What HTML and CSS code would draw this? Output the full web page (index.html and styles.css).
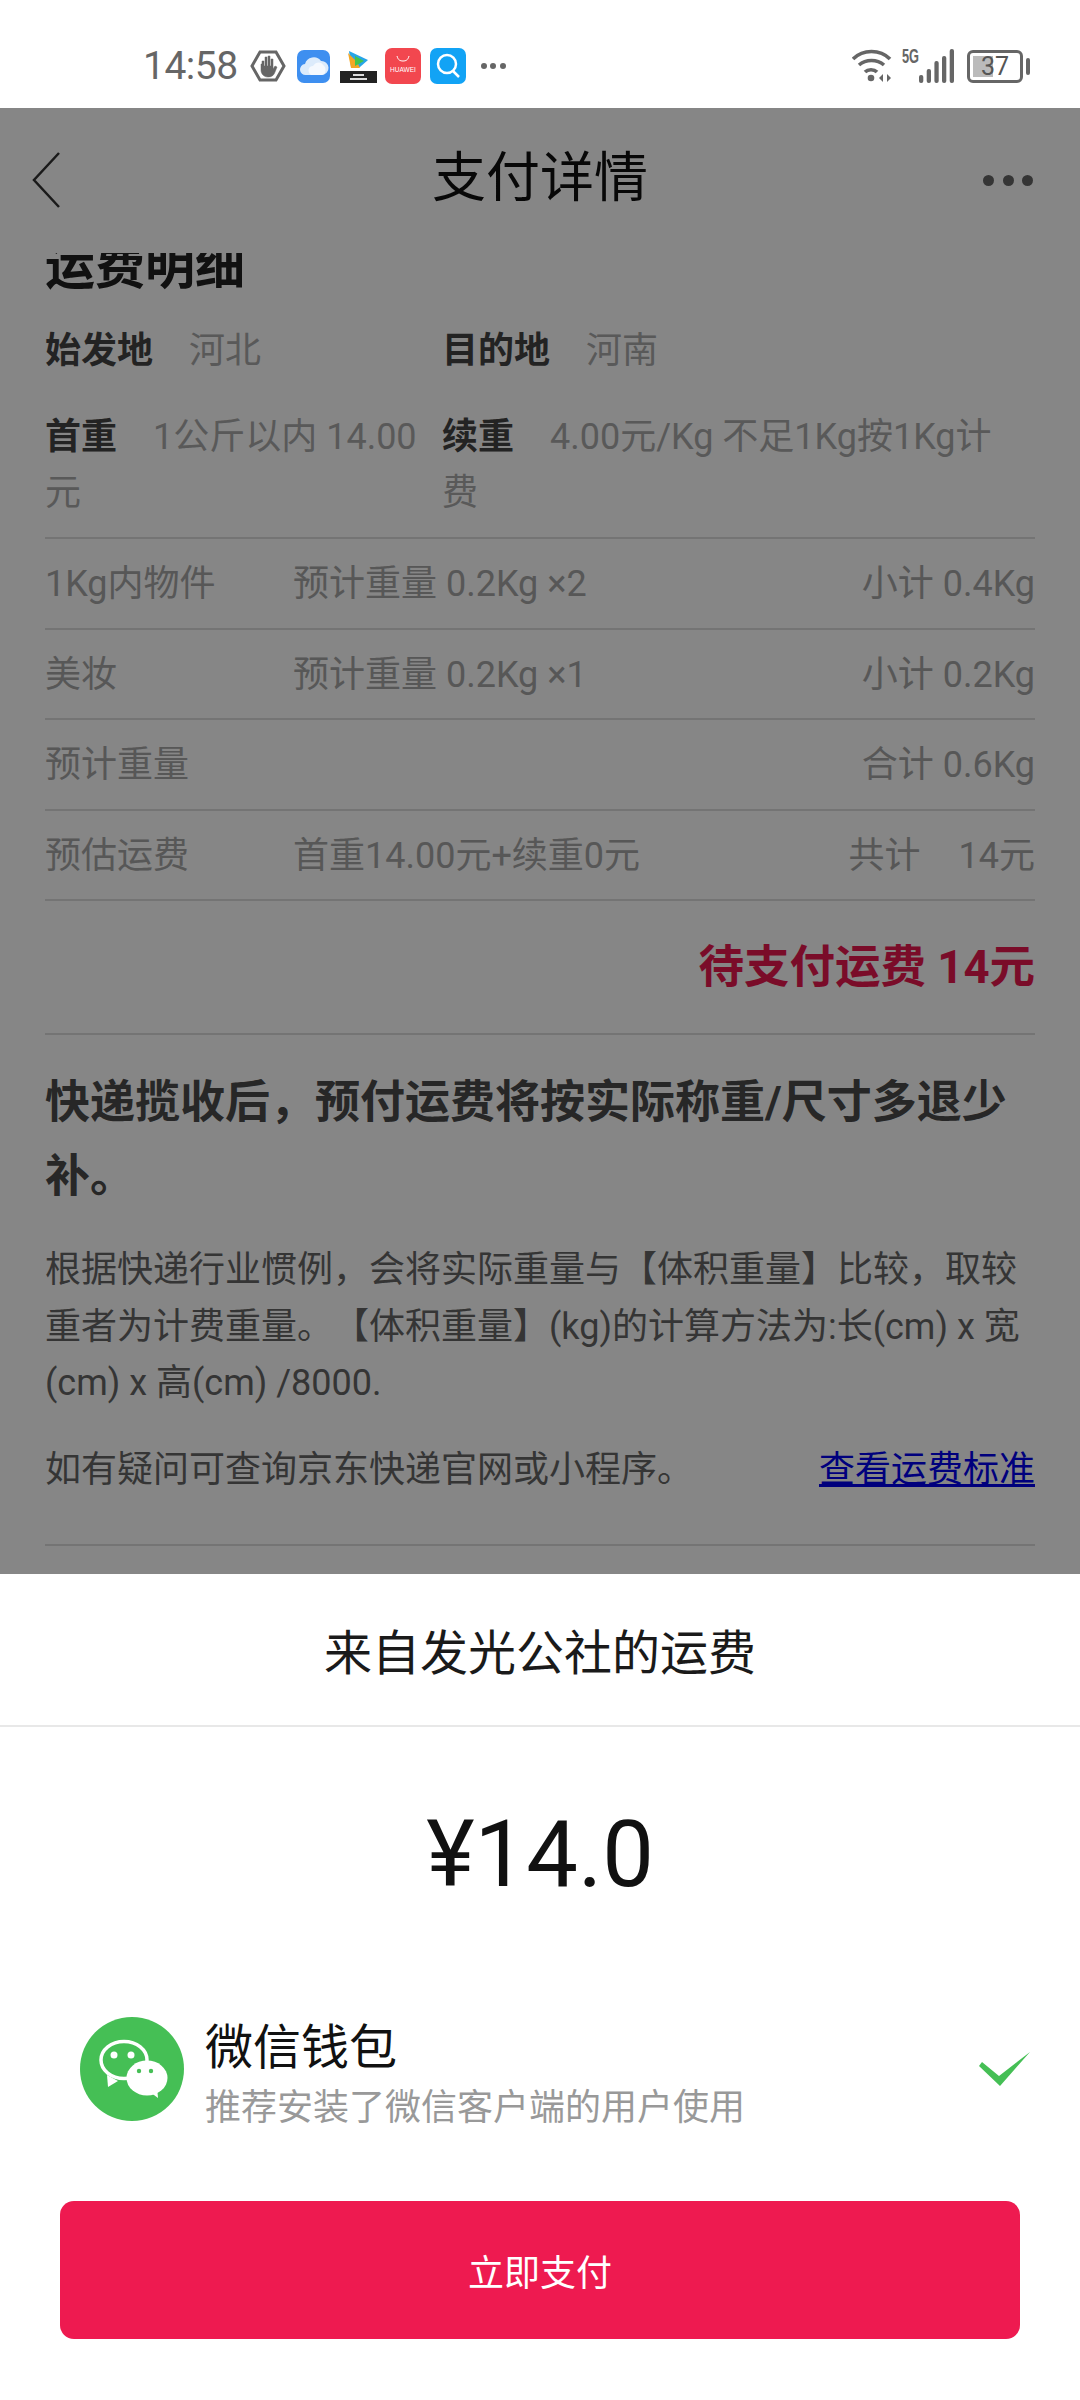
FILE: index.html
```html
<!DOCTYPE html>
<html lang="zh">

<head>
    <meta charset="utf-8">
    <title>支付详情</title>
    <link rel="stylesheet" href="styles.css">
</head>

<body>
    <!-- Status bar -->
    <div class="status-bar">
        <div class="status-left">
            <span class="clock">14:58</span>
            <svg class="ic-hand" viewBox="0 0 36 32"><path d="M10 2h16l8 14-8 14H10L2 16z" fill="none" stroke="#666" stroke-width="3"/><path d="M11 14v6c0 4 3 7 7 7s6-2 7-5l2-5-2-1-2 3V9h-2v7h-1V6h-2v10h-1V7h-2v9h-1v-5h-2v3z" fill="#666" stroke="#666" stroke-width=".5"/></svg>
            <svg class="ic-cloud" viewBox="0 0 33 33"><rect width="33" height="33" rx="7" fill="#3e8ff0"/><path d="M9 25a5.500 5.500 0 0 1-1-11A9 9 0 0 1 24 11a7 7 0 0 1 1 14z" fill="#dcebfb"/><path d="M14 25c-4-3-3-9 2-9 3-5 9-4 10-1 4 2 3 10-1 10z" fill="#fff" opacity=".7"/></svg>
            <svg class="ic-tv" viewBox="0 0 37 33"><path d="M9 1l19 9-8 7H11z" fill="#27a5e8"/><path d="M8 3l3 15 9 0-3-6z" fill="#f5a623"/><path d="M15 6l9 5-9 5z" fill="#45c34a"/><rect y="21" width="37" height="12" fill="#222"/><path d="M13 24h11v2H13zM10 28h17v2H10z" fill="#ddd"/></svg>
            <svg class="ic-huawei" viewBox="0 0 36 36"><rect width="36" height="36" rx="7" fill="#f2474f"/><path d="M12 8c1 4 3 5 6 5s5-1 6-5" fill="none" stroke="#fff" stroke-width="1"/><text x="18" y="24" class="huawei-text">HUAWEI</text></svg>
            <svg class="ic-search" viewBox="0 0 36 36"><rect width="36" height="36" rx="7" fill="#12a3f5"/><circle cx="17" cy="16" r="9" fill="none" stroke="#fff" stroke-width="2.500"/><path d="M23 23l6 6" stroke="#fff" stroke-width="2.500"/></svg>
            <span class="status-dots"><i></i><i></i><i></i></span>
        </div>
        <div class="status-right">
            <svg class="ic-wifi" viewBox="0 0 40 34"><g fill="none" stroke="#666" stroke-width="3.600"><path d="M1 10c10-10 27-10 37 0"/><path d="M7 16c7-6 18-6 25 0"/><path d="M13 23c3-3 9-3 12 0"/></g><circle cx="19" cy="29" r="3.300" fill="#666"/><path d="M27 29l4-4v8zM35 25v8l4-4z" fill="#666"/></svg>
            <span class="fiveg">5G</span>
            <svg class="ic-signal" viewBox="0 0 35 34"><g fill="#666"><rect x="0" y="26" width="4.300" height="8" rx="2"/><rect x="7.700" y="20" width="4.300" height="14" rx="2"/><rect x="15.400" y="12" width="4.300" height="22" rx="2"/><rect x="23" y="7" width="4.300" height="27" rx="2"/><rect x="30.700" y="0" width="4.300" height="34" rx="2"/></g></svg>
            <div class="battery">
                <div class="battery-body"><span class="battery-fill"></span><span class="battery-num">37</span></div>
                <span class="battery-cap"></span>
            </div>
        </div>
    </div>

    <div class="page">
        <!-- Title bar -->
        <div class="nav">
            <svg class="ic-back" viewBox="0 0 28 56"><path d="M27 1L2 28l25 27" fill="none" stroke="#333" stroke-width="2.500"/></svg>
            <h1>支付详情</h1>
            <span class="nav-dots"><i></i><i></i><i></i></span>
        </div>

        <!-- Scrolled content, the heading is cut by the title bar -->
        <div class="scroll">
            <div class="scroll-inner">
                <h2>运费明细</h2>

                <div class="info-grid">
                    <p><b>始发地</b><span>河北</span></p>
                    <p><b>目的地</b><span>河南</span></p>
                    <p><b>首重</b><span>1公斤以内 14.00元</span></p>
                    <p><b>续重</b><span>4.00元/Kg 不足1Kg按1Kg计费</span></p>
                </div>

                <div class="fee-row"><span class="fee-name">1Kg内物件</span><span class="fee-mid">预计重量 0.2Kg ×2</span><span class="fee-end">小计 0.4Kg</span></div>
                <div class="fee-row"><span class="fee-name">美妆</span><span class="fee-mid">预计重量 0.2Kg ×1</span><span class="fee-end">小计 0.2Kg</span></div>
                <div class="fee-row"><span class="fee-name">预计重量</span><span class="fee-mid"></span><span class="fee-end">合计 0.6Kg</span></div>
                <div class="fee-row"><span class="fee-name">预估运费</span><span class="fee-mid">首重14.00元+续重0元</span><span class="fee-end">共计<em>14元</em></span></div>

                <div class="total">待支付运费 14元</div>

                <h3>快递揽收后，预付运费将按实际称重/尺寸多退少补。</h3>
                <p class="note">根据快递行业惯例，会将实际重量与【体积重量】比较，取较重者为计费重量。【体积重量】(kg)的计算方法为:长(cm) x 宽(cm) x 高(cm) /8000.</p>
                <div class="help">
                    <span>如有疑问可查询京东快递官网或小程序。</span>
                    <a href="#">查看运费标准</a>
                </div>
            </div>
        </div>

        <div class="mask"></div>

        <!-- Payment sheet -->
        <div class="sheet">
            <div class="sheet-title">来自发光公社的运费</div>
            <div class="amount">¥14.0</div>
            <div class="pay-option">
                <svg class="ic-wechat" viewBox="0 0 104 104">
                    <circle cx="52" cy="52" r="52" fill="#45bf55"/>
                    <path d="M27 58l1 12 10-6z" fill="#fff"/>
                    <ellipse cx="44" cy="43" rx="23" ry="18.500" fill="none" stroke="#fff" stroke-width="3.500"/>
                    <circle cx="34" cy="38" r="3.500" fill="#fff"/>
                    <circle cx="51" cy="38" r="3.500" fill="#fff"/>
                    <ellipse cx="67" cy="61" rx="20.500" ry="17.500" fill="#fff"/>
                    <path d="M70 75l8 6-1-11z" fill="#fff"/>
                    <circle cx="59" cy="54" r="2.200" fill="#45bf55"/>
                    <circle cx="71" cy="54" r="2.200" fill="#45bf55"/>
                </svg>
                <div class="pay-text">
                    <div class="pay-name">微信钱包</div>
                    <div class="pay-desc">推荐安装了微信客户端的用户使用</div>
                </div>
                <svg class="ic-check" viewBox="0 0 51 34"><path d="M0 14l3-4 17 14L51 0 21 34z" fill="#45bf55"/></svg>
            </div>
            <button class="pay-btn">立即支付</button>
        </div>
    </div>
</body>

</html>
```

FILE: styles.css
```css
* {
    box-sizing: border-box;
}

body {
    margin: 0;
    width: 1080px;
    height: 2400px;
    overflow: hidden;
    background: #fff;
    font-family: "Roboto", "Noto Sans CJK SC", sans-serif;
    color: #222;
    text-spacing-trim: space-all;
}

/* Status bar */
.status-bar {
    height: 108px;
    display: flex;
    justify-content: space-between;
    align-items: center;
    padding: 24px 50px 0 143px;
    color: #666;
}

.status-left,
.status-right {
    display: flex;
    align-items: center;
}

.clock {
    font-size: 39px;
    letter-spacing: -0.5px;
    margin-right: 12px;
}

.ic-hand {
    width: 36px;
    height: 32px;
    margin-right: 11px;
}

.ic-cloud {
    width: 33px;
    height: 33px;
    margin-right: 10px;
}

.ic-tv {
    width: 37px;
    height: 33px;
    margin-right: 8px;
}

.ic-huawei {
    width: 36px;
    height: 36px;
    margin-right: 9px;
}

.ic-search {
    width: 36px;
    height: 36px;
}

.huawei-text {
    font-family: "Liberation Sans", sans-serif;
    font-size: 6.500px;
    fill: #fff;
    text-anchor: middle;
}

.status-dots {
    display: flex;
    gap: 3.500px;
    margin-left: 15px;
}

.status-dots i {
    width: 6px;
    height: 6px;
    border-radius: 50%;
    background: #666;
}

.ic-wifi {
    width: 40px;
    height: 34px;
    margin-right: 10px;
}

/* narrow label squeezed with a transform, no condensed bold face installed */
.fiveg {
    width: 17px;
    align-self: flex-start;
    font-family: "Liberation Sans", sans-serif;
    font-size: 20px;
    font-weight: bold;
    line-height: 15px;
    white-space: nowrap;
    transform: scaleX(0.64);
    transform-origin: left top;
}

.ic-signal {
    width: 35px;
    height: 34px;
}

.battery {
    display: flex;
    align-items: center;
    margin-left: 13px;
}

.battery-body {
    position: relative;
    width: 56px;
    height: 33px;
    border: 3px solid #666;
    border-radius: 6px;
    overflow: hidden;
}

.battery-fill {
    position: absolute;
    left: 3px;
    top: 3px;
    bottom: 3px;
    width: 20px;
    background: #bbb;
}

.battery-num {
    position: relative;
    display: block;
    text-align: center;
    font-size: 25px;
    line-height: 27px;
    color: #555;
}

.battery-cap {
    width: 4px;
    height: 17px;
    margin-left: 3px;
    border-radius: 2px;
    background: #666;
}

/* Page under the mask */
.page {
    position: relative;
    height: 2292px;
    overflow: hidden;
}

.nav {
    height: 145px;
    display: flex;
    align-items: center;
    justify-content: center;
    padding-bottom: 3px;
    position: relative;
    background: #fff;
    z-index: 1;
}

.nav h1 {
    margin: 0;
    font-size: 54px;
    font-weight: 400;
    color: #111;
    line-height: 1;
}

.ic-back {
    position: absolute;
    left: 32px;
    top: 44px;
    width: 28px;
    height: 56px;
}

.nav-dots {
    position: absolute;
    right: 47px;
    top: 67px;
    display: flex;
    gap: 8.500px;
}

.nav-dots i {
    width: 11px;
    height: 11px;
    border-radius: 50%;
    background: #666;
}

.scroll {
    height: 1321px;
    overflow: hidden;
    padding: 0 45px;
}

.scroll-inner {
    margin-top: -21px;
}

.scroll h2 {
    margin: 0 0 21px;
    font-size: 50px;
    line-height: 70px;
    font-weight: 700;
    color: #222;
}

.info-grid {
    display: grid;
    grid-template-columns: 397px 1fr;
    row-gap: 30px;
    padding-bottom: 16px;
    border-bottom: 2px solid #ddd;
}

.info-grid p {
    margin: 0;
    padding-right: 10px;
    font-size: 36px;
    line-height: 56px;
    color: #aaa;
}

.info-grid p:first-child,
.info-grid p:nth-child(3) {
    padding-right: 0;
}

.info-grid b {
    color: #444;
    margin-right: 36px;
}

.fee-row {
    height: 90.500px;
    display: flex;
    align-items: center;
    padding-bottom: 6px;
    font-size: 36px;
    color: #a6a6a6;
    border-bottom: 2px solid #ddd;
}

.fee-name {
    width: 248px;
}

.fee-mid {
    flex: 1;
}

.fee-end em {
    font-style: normal;
    margin-left: 38px;
}

.total {
    height: 134px;
    display: flex;
    align-items: center;
    justify-content: flex-end;
    padding-bottom: 8px;
    font-size: 45.500px;
    font-weight: 700;
    color: #e8184f;
    border-bottom: 2px solid #ddd;
}

.scroll h3 {
    margin: 31px 0 28px;
    font-size: 45px;
    line-height: 74px;
    font-weight: 700;
    color: #4a4a4a;
}

.note {
    margin: 0;
    font-size: 36px;
    line-height: 56.500px;
    color: #666;
}

.help {
    display: flex;
    justify-content: space-between;
    margin-top: 30px;
    padding-bottom: 46px;
    font-size: 36px;
    line-height: 56px;
    color: #666;
    border-bottom: 2px solid #ddd;
}

.help a {
    color: #0000ee;
}

.mask {
    position: absolute;
    inset: 0;
    z-index: 2;
    background: rgba(0, 0, 0, 0.475);
}

/* Bottom sheet */
.sheet {
    position: absolute;
    left: 0;
    right: 0;
    bottom: 0;
    height: 826px;
    z-index: 3;
    background: #fff;
    text-align: center;
}

.sheet-title {
    height: 153px;
    display: flex;
    align-items: center;
    justify-content: center;
    padding-bottom: 2px;
    font-size: 48px;
    color: #1a1a1a;
    border-bottom: 2px solid #e8e8e8;
}

.amount {
    font-size: 92px;
    line-height: 100px;
    margin-top: 78px;
    color: #111;
}

.pay-option {
    display: flex;
    align-items: center;
    margin-top: 98px;
    padding: 0 50px 0 80px;
    text-align: left;
}

.ic-wechat {
    width: 104px;
    height: 104px;
    flex: none;
}

.pay-text {
    flex: 1;
    margin: 16px 0 0 21px;
}

.pay-name {
    font-size: 48px;
    line-height: 58px;
    color: #111;
}

.pay-desc {
    margin-top: 4px;
    font-size: 36px;
    line-height: 54px;
    color: #999;
}

.ic-check {
    width: 51px;
    height: 34px;
}

.pay-btn {
    display: block;
    width: 960px;
    height: 138px;
    margin: 66px auto 0;
    border: 0;
    border-radius: 14px;
    background: #ee1a50;
    color: #fff;
    font-family: inherit;
    font-size: 36px;
}
```
